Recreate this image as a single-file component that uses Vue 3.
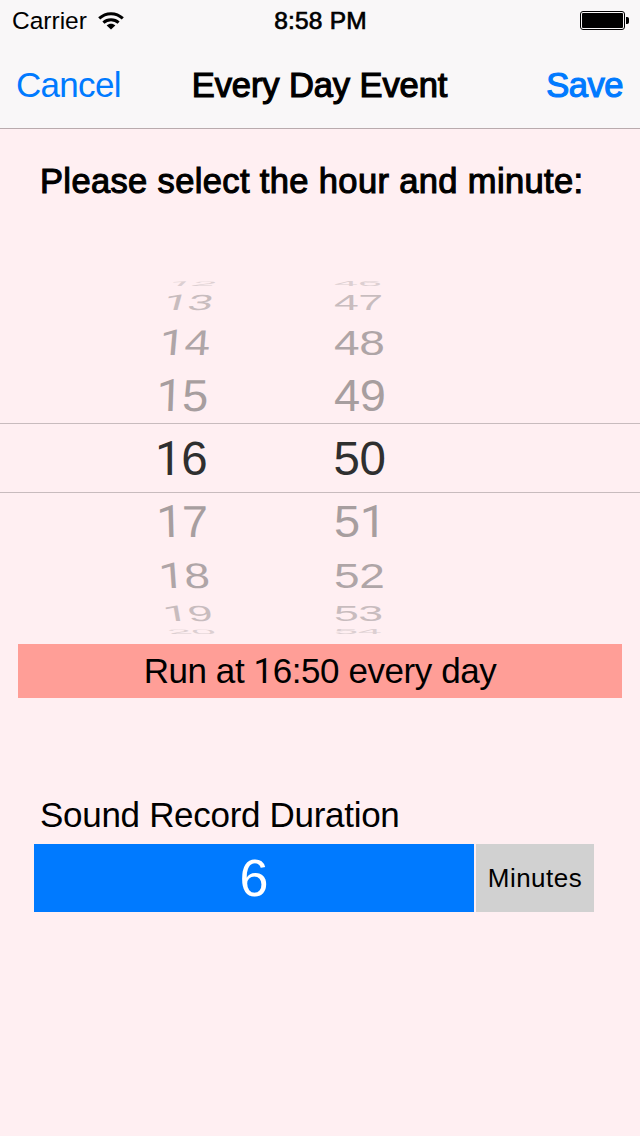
<script setup>
const hours = [
  { n: '12', h: 11, sx: 0.92, sy: 0.14, skew: -46, x: 11, o: 0.16 },
  { n: '13', h: 28, sx: 0.94, sy: 0.46, skew: -15, x: 7, o: 0.26 },
  { n: '14', h: 52, sx: 0.97, sy: 0.75, skew: -5, x: 3.5, o: 0.38 },
  { n: '15', h: 54, sx: 0.99, sy: 0.94, skew: -2, x: 1, o: 0.42 },
  { n: '16', h: 70, sx: 1, sy: 1, skew: 0, x: 0, o: 1 },
  { n: '17', h: 58, sx: 0.99, sy: 0.94, skew: 1.5, x: 1, o: 0.42 },
  { n: '18', h: 49, sx: 0.97, sy: 0.75, skew: 4, x: 3, o: 0.38 },
  { n: '19', h: 27, sx: 0.94, sy: 0.46, skew: 10, x: 6.5, o: 0.26 },
  { n: '20', h: 10, sx: 0.92, sy: 0.14, skew: 40, x: 10.5, o: 0.16 },
]
const rows = hours.map((r, i) => ({ ...r, minute: String(46 + i) }))
const hourStyle = (r) => ({
  transform: `translateX(${r.x}px) skewX(${r.skew}deg) scale(${r.sx}, ${r.sy})`,
  opacity: r.o,
})
const minuteStyle = (r) => ({ transform: `scale(${r.sx}, ${r.sy})`, opacity: r.o })
</script>

<template>
  <main class="screen">
    <header class="bar">
      <div class="status">
        <div class="carrier">
          <span>Carrier</span>
          <svg width="26" height="18" viewBox="0 0 26 18">
            <g fill="none" stroke="#000" stroke-width="3">
              <path d="M1.2 6.4C8 .1 18 .1 24.8 6.4" />
              <path d="M5.4 10.6C9.6 6.7 16.4 6.7 20.6 10.6" />
            </g>
            <path d="M8.7 13.4C11 11.3 15 11.3 17.3 13.4L13 17.6Z" />
          </svg>
        </div>
        <span class="time">8:58 PM</span>
        <svg class="battery" width="50" height="20" viewBox="0 0 50 20">
          <rect x=".5" y=".5" width="44" height="18" rx="2.5" fill="none" stroke="#000" />
          <rect x="2" y="2" width="41" height="15" rx="1" />
          <path d="M46 6h1.2a1.8 1.8 0 0 1 1.8 1.8v3.4a1.8 1.8 0 0 1-1.8 1.8H46z" />
        </svg>
      </div>
      <nav class="nav">
        <span class="cancel">Cancel</span>
        <h1 class="title">Every Day Event</h1>
        <span class="save">Save</span>
      </nav>
    </header>

    <h2 class="prompt">Please select the hour and minute:</h2>

    <section class="wheel">
      <div
        v-for="r in rows"
        :key="r.n"
        class="row"
        :class="{ selected: r.n === '16' }"
        :style="{ height: r.h + 'px' }"
      >
        <span class="num" :style="hourStyle(r)"><span v-for="(c, i) in r.n" :key="i" :class="{ one: c === '1' }">{{ c }}</span></span>
        <span class="num minute" :style="minuteStyle(r)"><span v-for="(c, i) in r.minute" :key="i" :class="{ one: c === '1' }">{{ c }}</span></span>
      </div>
    </section>

    <p class="summary">Run at <span class="one">1</span>6:50 every day</p>

    <h3 class="label">Sound Record Duration</h3>
    <div class="duration">
      <div class="value">6</div>
      <div class="unit">Minutes</div>
    </div>
  </main>
</template>

<style>
html,
body {
  background: #ffeff2;
}
</style>

<style scoped>
.screen {
  width: 640px;
  height: 1136px;
  overflow: hidden;
  background: #ffeff2;
  color: #000;
  font-family: "Liberation Sans", Arial, sans-serif;
  font-size: 35px;
}
h1, h2, h3, p {
  margin: 0;
  font-size: 35px;
  font-weight: 400;
}
.one {
  font-family: Roboto, sans-serif;
}
.bar {
  height: 128px;
  background: #f9f7f8;
  border-bottom: 1px solid #b9abae;
}
.status {
  display: grid;
  grid-template-columns: 1fr auto 1fr;
  height: 41px;
  padding: 0 10px 0 12px;
  align-items: center;
  font-size: 24.5px;
  line-height: 41px;
}
.carrier {
  display: flex;
  align-items: center;
  gap: 11px;
}
.time {
  letter-spacing: 0.2px;
  margin-right: 1px;
  -webkit-text-stroke: 0.7px #000;
}
.battery {
  justify-self: end;
}
.nav {
  display: grid;
  grid-template-columns: 1fr auto 1fr;
  height: 87px;
  padding: 0 17px 0 16px;
  line-height: 88px;
  letter-spacing: -0.5px;
}
.title {
  font-size: 34.5px;
  letter-spacing: -0.1px;
  -webkit-text-stroke: 1.2px #000;
}
.cancel {
  letter-spacing: -0.7px;
  color: #007aff;
}
.save {
  justify-self: end;
  color: #007aff;
  font-size: 34.5px;
  -webkit-text-stroke: 1.2px #007aff;
}
.prompt {
  margin: 32px 0 0 40px;
  height: 40px;
  font-size: 34.5px;
  line-height: 40px;
  letter-spacing: 0.36px;
  white-space: nowrap;
  -webkit-text-stroke: 1.1px #000;
}
.wheel {
  margin-top: 77px;
  height: 366px;
}
.row {
  display: grid;
  grid-template-columns: 155px 178.5px auto;
  box-sizing: border-box;
  align-items: center;
  color: #2f2f2f;
  font-size: 47.5px;
  line-height: 0;
}
.row.selected {
  padding-top: 2px;
  border-top: 1px solid #c8bbbe;
  border-bottom: 1px solid #c8bbbe;
}
.num {
  grid-column: 2;
  justify-self: start;
  letter-spacing: -0.5px;
}
.minute {
  grid-column: 3;
  transform-origin: 0 50%;
}
.summary {
  margin: 0 18px;
  height: 54px;
  background: #ff9e97;
  text-align: center;
  line-height: 53px;
  letter-spacing: -0.43px;
}
.label {
  margin: 96px 0 0 40px;
  height: 40px;
  line-height: 41px;
  letter-spacing: -0.3px;
}
.duration {
  display: flex;
  gap: 2px;
  margin: 10px 0 0 34px;
  line-height: 69px;
}
.value {
  width: 440px;
  height: 68px;
  background: #007aff;
  color: #fff;
  font-size: 52px;
  text-align: center;
}
.unit {
  width: 118px;
  background: #d1d1d1;
  font-size: 26px;
  letter-spacing: 0.5px;
  line-height: 68px;
  text-align: center;
}
</style>
